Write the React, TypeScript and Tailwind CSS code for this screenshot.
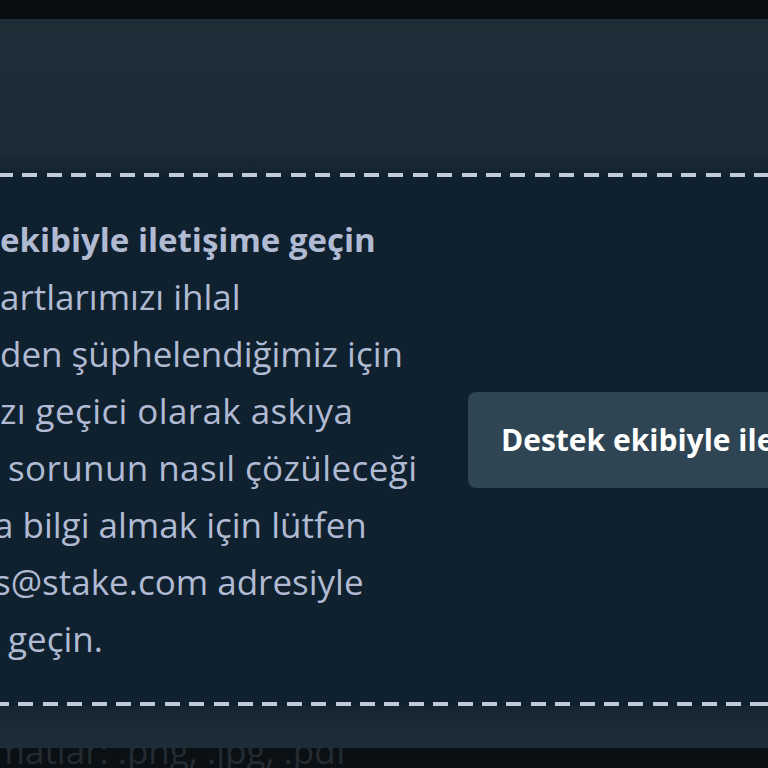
import React from "react";

const lines = [
  { hidden: "Hizmet ş", shown: "artlarımızı ihlal", offset: "ml-0" },
  { hidden: "ettiğiniz", shown: "den şüphelendiğimiz için", offset: "ml-0" },
  { hidden: "hesabını", shown: "zı geçici olarak askıya", offset: "ml-0 tracking-[0.4px]" },
  { hidden: "aldık. Bu", shown: "sorunun nasıl çözüleceği", offset: "ml-[8px] tracking-[0.4px]" },
  { hidden: "hakkınd", shown: "a bilgi almak için lütfen", offset: "-ml-[6px]" },
  { hidden: "complaint", shown: "s@stake.com adresiyle", offset: "-ml-[6px]" },
  { hidden: "iletişime", shown: "geçin.", offset: "ml-[8px]" },
];

function Line({ hidden, shown, offset }: { hidden: string; shown: string; offset: string }) {
  return (
    <div className="flex h-[57px] items-center whitespace-nowrap">
      {/* prefix that sits left of the viewport edge */}
      <span className="flex w-0 justify-end">{hidden}</span>
      <span className={offset}>{shown}</span>
    </div>
  );
}

export default function App() {
  return (
    <div className="flex h-[768px] w-[768px] flex-col overflow-hidden bg-[#0a0f13] font-['Open_Sans',sans-serif]">
      <div className="h-[19px] shrink-0 bg-[#090d11]" />

      <div className="flex h-[729px] shrink-0 flex-col bg-[#1a2c38]">
        <div className="flex h-[154px] shrink-0 flex-col bg-gradient-to-b from-[#1e2e37] to-[#1a2b38]">
          <div className="flex-1" />
          <div className="h-[22px] bg-gradient-to-b from-transparent to-[#132430]" />
        </div>

        <div className="h-[4px] shrink-0 bg-[#0f212e] bg-[repeating-linear-gradient(90deg,#c0c9da_0px,#c0c9da_15px,transparent_15px,transparent_24.4px)] bg-[position:-2px_0]" />

        <div className="flex h-[525px] shrink-0 items-center bg-[#0f212e]">
          <div className="w-[468px] shrink-0 text-[35px] font-medium text-[#b1bad3]">
            <div className="flex h-[57px] items-center whitespace-nowrap text-[33px] font-bold">
              <span className="flex w-0 justify-end">Destek&nbsp;</span>
              <span>ekibiyle iletişime geçin</span>
            </div>
            {lines.map((l) => (
              <Line key={l.shown} {...l} />
            ))}
          </div>
          <button className="flex h-[96px] w-[340px] shrink-0 items-center rounded-lg bg-[#2f4553] pl-[33px] text-[30px] font-bold whitespace-nowrap text-white">
            Destek ekibiyle iletişime geçin
          </button>
        </div>

        <div className="h-[4px] shrink-0 bg-[#0f212e] bg-[repeating-linear-gradient(90deg,#c0c9da_0px,#c0c9da_15px,transparent_15px,transparent_24.4px)] bg-[position:-6px_0]" />

        <div className="flex-1 bg-gradient-to-b from-[#142530] via-[#1a2b37] to-[#1d2d37]" />
      </div>

      <div className="h-[20px] shrink-0 overflow-hidden bg-[#0b1014]">
        <div className="-mt-[15px] -ml-[267px] whitespace-nowrap text-[35px] leading-[35px] text-[#242c32]">
          Desteklenen formatlar: .png, .jpg, .pdf
        </div>
      </div>
    </div>
  );
}
